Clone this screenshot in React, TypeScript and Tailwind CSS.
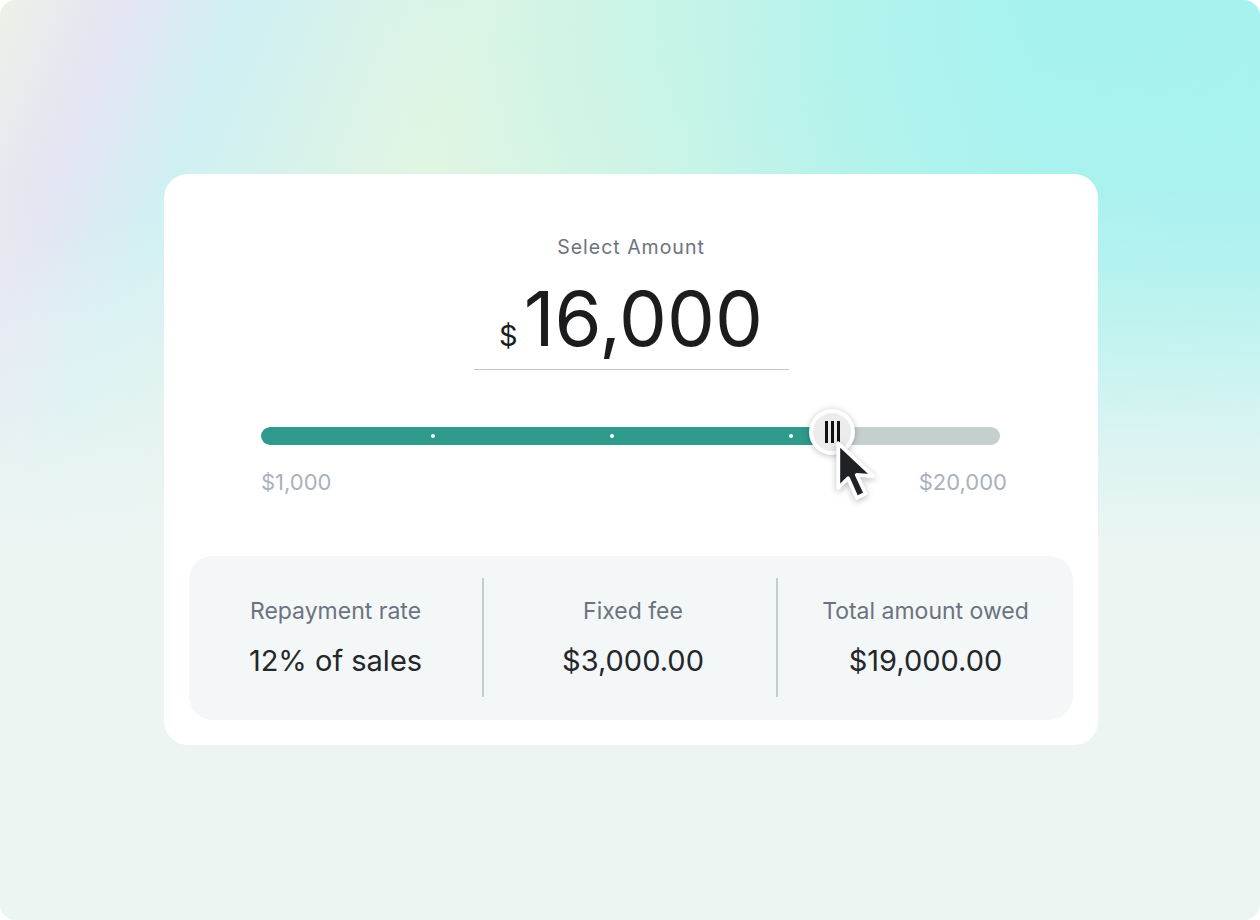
import { useState } from "react";

const stats = [
  { label: "Repayment rate", value: "12% of sales", w: "w-[293px]" },
  { label: "Fixed fee", value: "$3,000.00", w: "w-[294px] pl-[6px]" },
  { label: "Total amount owed", value: "$19,000.00", w: "flex-1" },
];

function Cursor() {
  return (
    <svg width="48" height="70" viewBox="0 0 44 64" className="drop-shadow-[0_2px_3px_rgba(0,0,0,0.25)]">
      <path
        d="M3 3 L3 44 L12 35 L20 53 L28 49 L20 32 L35 33 Z"
        fill="#1f2124"
        stroke="#ffffff"
        strokeWidth="3.5"
        strokeLinejoin="round"
      />
    </svg>
  );
}

function App() {
  const [amount] = useState(16000);
  const pct = ((amount - 1000) / 19000) * 100;

  return (
    <div className="w-[1260px] h-[920px] bg-white font-['Inter',sans-serif]">
      <div className="w-full h-full rounded-[16px] overflow-hidden bg-[#edf5f3] bg-[radial-gradient(ellipse_700px_420px_at_1080px_0px,rgba(162,242,240,0.85)_0%,rgba(162,242,240,0)_100%),linear-gradient(180deg,rgba(237,245,243,0)_0%,rgba(237,245,243,0)_20%,#edf5f3_60%),linear-gradient(112deg,#eef0e8_0%,#e3e4f3_8%,#cff0f3_15%,#e1f5e2_30%,#d8f5e4_45%,#b4f2ec_65%,#a8f1f0_100%)] pt-[174px] pl-[164px]">
        <div className="w-[934px] h-[571px] bg-white rounded-[24px] flex flex-col items-center pt-[61px] px-[25px]">
          <div className="text-[19.5px] tracking-[1px] text-[#6b7380] leading-6">Select Amount</div>

          <div className="mt-[21px] w-[315px] border-b border-[#bfc5cf] flex items-baseline justify-center pb-[13px]">
            <span className="text-[29px] text-[#1b1c1e] leading-none mr-[6px]">$</span>
            <span className="text-[76px] text-[#1b1c1e] leading-none">16,000</span>
          </div>

          <div className="relative w-[739px] mt-[57px] self-start ml-[72px]">
            <div className="h-[18px] rounded-full bg-[#c4cfce] overflow-hidden flex">
              <div className="h-full bg-[#2e9a8b] rounded-l-full" style={{ width: `${pct}%` }} />
            </div>
            <div className="absolute left-[170px] top-[7px] w-[4px] h-[4px] rounded-full bg-white" />
            <div className="absolute left-[349px] top-[7px] w-[4px] h-[4px] rounded-full bg-white" />
            <div className="absolute left-[528px] top-[7px] w-[4px] h-[4px] rounded-full bg-white" />
            <div className="absolute left-[548px] top-[-18px] w-[46px] h-[46px] rounded-full bg-[#ececec] border-[4px] border-white shadow-[0_1px_6px_rgba(0,0,0,0.25)] flex items-center justify-center gap-[3px]">
              <div className="w-[3px] h-[22px] bg-[#111]" />
              <div className="w-[3px] h-[22px] bg-[#111]" />
              <div className="w-[3px] h-[22px] bg-[#111]" />
            </div>
            <div className="absolute left-[574px] top-[13px]">
              <Cursor />
            </div>
            <div className="flex justify-between mt-[24px] mr-[-7px] text-[22px] text-[#a9b1bd] leading-[26px]">
              <span>$1,000</span>
              <span>$20,000</span>
            </div>
          </div>

          <div className="mt-[61px] w-[884px] h-[164px] bg-[#f4f7f8] rounded-[24px] flex pt-[22px]">
            {stats.map((s, i) => (
              <div
                key={s.label}
                className={`${s.w} h-[119px] flex flex-col items-center pt-[19px] ${
                  i > 0 ? "border-l-2 border-[#c4cccc]" : ""
                }`}
              >
                <div className="text-[23px] text-[#6b7380] leading-7">{s.label}</div>
                <div className="mt-[19px] text-[29px] text-[#24262a] leading-[34px]">{s.value}</div>
              </div>
            ))}
          </div>
        </div>
      </div>
    </div>
  );
}

export default App;
